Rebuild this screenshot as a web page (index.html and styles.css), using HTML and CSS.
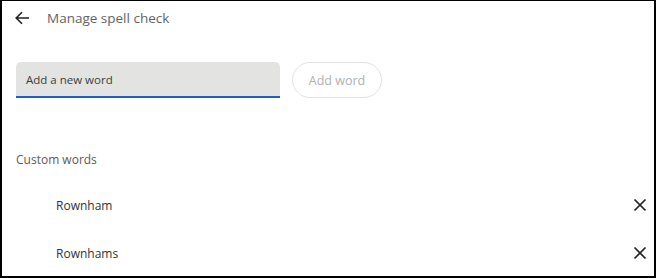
FILE: index.html
```html
<!DOCTYPE html>
<html>
<head>
<meta charset="utf-8">
<link rel="stylesheet" href="styles.css">
</head>
<body>
<div class="frame">
  <header class="header">
    <button class="back" aria-label="Back">
      <svg width="16" height="16" viewBox="0 0 16 16"><path d="M15 8H2.5M8 2.2L2.2 8l5.8 5.8" fill="none" stroke="#202124" stroke-width="1.6"/></svg>
    </button>
    <h1 class="title">Manage spell check</h1>
  </header>
  <div class="add-row">
    <div class="field"><span class="placeholder">Add a new word</span></div>
    <button class="add-btn">Add word</button>
  </div>
  <div class="section-label">Custom words</div>
  <ul class="words">
    <li class="word"><span>Rownham</span>
      <svg class="x" width="14" height="14" viewBox="0 0 14 14"><path d="M1.5 1.5l11 11M12.5 1.5l-11 11" stroke="#202124" stroke-width="1.7"/></svg>
    </li>
    <li class="word"><span>Rownhams</span>
      <svg class="x" width="14" height="14" viewBox="0 0 14 14"><path d="M1.5 1.5l11 11M12.5 1.5l-11 11" stroke="#202124" stroke-width="1.7"/></svg>
    </li>
  </ul>
</div>
</body>
</html>
```
FILE: styles.css
```css
html, body { margin: 0; padding: 0; background: #fff; }
body { font-family: "Open Sans", "Noto Sans", sans-serif; }
.frame {
  box-sizing: border-box;
  width: 656px;
  height: 278px;
  border: 2px solid #000;
  border-top-width: 1px;
  overflow: hidden;
}
.header {
  display: flex;
  align-items: center;
  height: 34px;
  padding-left: 10px;
}
.back {
  border: 0; background: none; padding: 0;
  width: 20px; height: 20px;
  display: flex; align-items: center; justify-content: center;
  margin-right: 15px;
}
.title {
  margin: 0;
  font-size: 13.5px;
  font-weight: 400;
  color: #5f6368;
}
.add-row {
  display: flex;
  align-items: center;
  gap: 12px;
  margin-top: 27px;
  padding-left: 14px;
}
.field {
  box-sizing: border-box;
  width: 264px;
  height: 36px;
  background: #e3e4e1;
  border-radius: 5px 5px 0 0;
  border-bottom: 2px solid #1a5fc8;
  display: flex;
  align-items: center;
  padding-left: 10px;
}
.placeholder { font-size: 11.5px; color: #3c3c3c; }
.add-btn {
  box-sizing: border-box;
  width: 90px;
  height: 36px;
  border: 1px solid #e2e2e2;
  border-radius: 18px;
  background: #fff;
  color: #b0b0b0;
  font-family: inherit;
  font-size: 12.5px;
}
.section-label {
  margin-top: 53px;
  padding-left: 14px;
  font-size: 12px;
  color: #5f5a55;
}
.words { list-style: none; margin: 13px 0 0; padding: 0; }
.word {
  display: flex;
  align-items: center;
  justify-content: space-between;
  height: 48px;
  padding-left: 54px;
  padding-right: 7px;
  font-size: 12px;
  color: #333;
}
```
